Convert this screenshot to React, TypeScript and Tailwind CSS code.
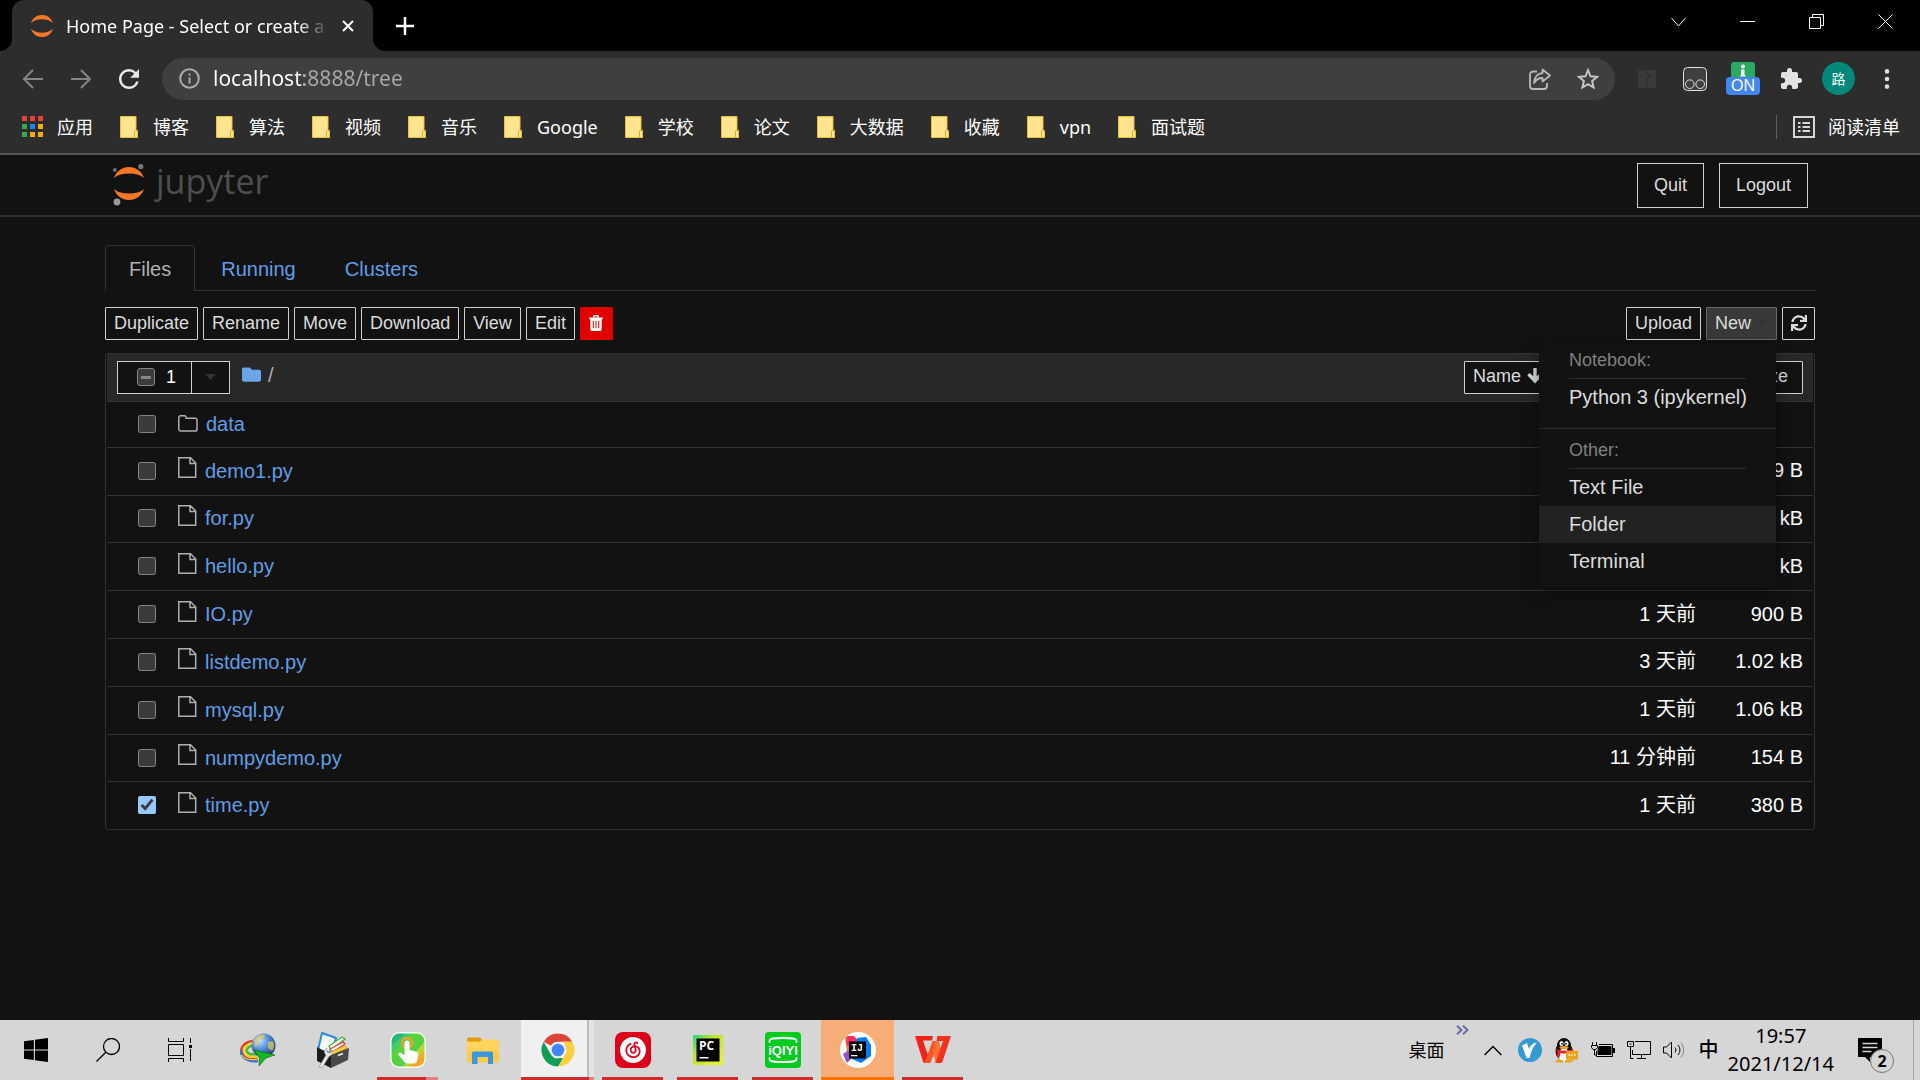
import React, { useEffect, useRef, useState } from "react";
import { clsx } from "clsx";
import { BsWindows } from "react-icons/bs";
import { FaFolder, FaSync } from "react-icons/fa";
import { MdExtension, MdRefresh } from "react-icons/md";
import { SiNeteasecloudmusic } from "react-icons/si";

const UI_FONT = "font-['Noto_Sans','Noto_Sans_CJK_SC',sans-serif]";
const PAGE_FONT = "font-['Liberation_Sans','Noto_Sans_CJK_SC',sans-serif]";

const bookmarks = [
  "博客",
  "算法",
  "视频",
  "音乐",
  "Google",
  "学校",
  "论文",
  "大数据",
  "收藏",
  "vpn",
  "面试题",
];

interface Entry {
  name: string;
  kind: "folder" | "file";
  modified?: string;
  size?: string;
  checked?: boolean;
}

const entries: Entry[] = [
  { name: "data", kind: "folder" },
  { name: "demo1.py", kind: "file", size: "9 B" },
  { name: "for.py", kind: "file", size: "kB" },
  { name: "hello.py", kind: "file", size: "kB" },
  { name: "IO.py", kind: "file", modified: "1 天前", size: "900 B" },
  { name: "listdemo.py", kind: "file", modified: "3 天前", size: "1.02 kB" },
  { name: "mysql.py", kind: "file", modified: "1 天前", size: "1.06 kB" },
  { name: "numpydemo.py", kind: "file", modified: "11 分钟前", size: "154 B" },
  { name: "time.py", kind: "file", modified: "1 天前", size: "380 B", checked: true },
];

/* ---------- browser chrome ---------- */

function Favicon() {
  return (
    <svg viewBox="0 0 22 22" className="size-[22px] shrink-0" fill="#f37726">
      <path d="M0 8C2 2.500 6 0 11 0s9 2.500 11 8C18.500 5.300 15 4.300 11 4.300S3.500 5.300 0 8Z" />
      <path d="M0 14c2 5.500 6 8 11 8s9-2.500 11-8c-3.500 2.700-7 3.700-11 3.700S3.500 16.700 0 14Z" />
    </svg>
  );
}

function TabStrip() {
  return (
    <div className="flex h-[51px] bg-black pl-3 text-white">
      <div className="relative flex w-[361px] items-center rounded-t-xl bg-[#2d2d2d] pl-[19px]">
        <span className="absolute bottom-0 -left-3 size-3 bg-[radial-gradient(circle_at_0_0,transparent_12px,#2d2d2d_12px)]" />
        <span className="absolute -right-3 bottom-0 size-3 bg-[radial-gradient(circle_at_100%_0,transparent_12px,#2d2d2d_12px)]" />
        <Favicon />
        <span className="ml-[13px] w-[263px] overflow-hidden text-lg whitespace-nowrap [mask-image:linear-gradient(to_right,black_88%,transparent)]">
          Home Page - Select or create a
        </span>
        <button aria-label="Close tab" className="ml-[11px] p-0.5">
          <svg viewBox="0 0 12 12" className="size-3" stroke="#fff" strokeWidth="2">
            <path d="M1 1l10 10M11 1L1 11" />
          </svg>
        </button>
      </div>
      <button aria-label="New tab" className="ml-[19px] px-1">
        <svg viewBox="0 0 18 18" className="size-[18px]" stroke="#fff" strokeWidth="2.500">
          <path d="M9 0v18M0 9h18" />
        </svg>
      </button>
      <div className="ml-auto flex h-[43px]">
        {[
          ["Search tabs", "M.5 4l7 8 7-8"],
          ["Minimize", "M0 7.500h15"],
          ["Restore", "M.5 3.500h11v11H.5zM3.500 3.500v-3h11v11h-3"],
          ["Close", "M.5.5l14 14M14.500.5l-14 14"],
        ].map(([label, d]) => (
          <button key={label} aria-label={label} className="flex w-[69px] items-center justify-center">
            <svg viewBox="0 0 15 15" className="size-[15px]" fill="none" stroke="#fff">
              <path d={d} />
            </svg>
          </button>
        ))}
      </div>
    </div>
  );
}

function AddressBar() {
  return (
    <div className="flex h-[55px] items-center bg-[#2d2d2d] pr-[30px] pl-[22px]">
      <button aria-label="Back">
        <svg viewBox="0 0 22 22" className="size-[22px]" fill="none" stroke="#858585" strokeWidth="2">
          <path d="M21 11H2.500M11 2l-9 9 9 9" />
        </svg>
      </button>
      <button aria-label="Forward" className="ml-[26px]">
        <svg viewBox="0 0 22 22" className="size-[22px]" fill="none" stroke="#858585" strokeWidth="2">
          <path d="M1 11h18.500M11 2l9 9-9 9" />
        </svg>
      </button>
      <button aria-label="Reload" className="ml-[22px]">
        <MdRefresh className="size-[30px] text-[#e8e8e8]" />
      </button>

      <div className="mr-[23px] ml-[18px] flex h-[42px] flex-1 items-center rounded-full bg-[#3f3f3f] pr-4 pl-[17px]">
        <svg viewBox="0 0 21 21" className="size-[21px]" fill="none" stroke="#a9acb0" strokeWidth="2">
          <circle cx="10.500" cy="10.500" r="9.300" />
          <path d="M10.500 9.500v6M10.500 5.500v2" />
        </svg>
        <input
          aria-label="Address"
          defaultValue="localhost:8888/tree"
          className="ml-[13px] min-w-0 flex-1 bg-[linear-gradient(to_right,#fff_91px,#a8a8a8_91px)] bg-clip-text text-[21px] text-transparent outline-none"
        />
        <button aria-label="Share">
          <svg viewBox="0 0 22 22" className="size-[22px]" fill="none" stroke="#b8b8b8" strokeWidth="1.800" strokeLinejoin="round">
            <path d="M8 3.500H4a3 3 0 0 0-3 3V18a3 3 0 0 0 3 3h11a3 3 0 0 0 3-3v-3" />
            <path d="M13.500 1.500l7.500 6-7.500 6V10c-4 0-6.500 1.500-8.500 5 .3-5 3-9.500 8.500-9.800z" />
          </svg>
        </button>
        <button aria-label="Bookmark this page" className="ml-[26px]">
          <svg viewBox="0 0 22 22" className="size-[22px]" fill="none" stroke="#c4c4c4" strokeWidth="2">
            <path d="M11 2.200l2.500 6.100 6.600.5-5 4.300 1.500 6.400L11 16.100l-5.600 3.400 1.500-6.400-5-4.300 6.600-.5z" />
          </svg>
        </button>
      </div>

      <button aria-label="Disabled extension">
        <svg viewBox="0 0 18 18" className="size-[18px]">
          <rect width="18" height="18" rx="1" fill="#3a3a3a" />
          <path d="M9 0v4c4 0 4 3 1 4s-2 5-1 6v4" fill="none" stroke="#2a2a2a" />
        </svg>
      </button>
      <button aria-label="Tampermonkey" className="ml-[27px]">
        <svg viewBox="0 0 24 24" className="size-6" fill="none" stroke="#e0e0e0">
          <rect x=".5" y=".5" width="23" height="23" rx="4" fill="#3f3f3f" />
          <circle cx="6.800" cy="17.200" r="4.300" />
          <circle cx="17.200" cy="17.200" r="4.300" />
        </svg>
      </button>
      <button aria-label="Download helper" className="ml-[19px] flex h-[33px] w-[34px] flex-col items-center">
        <svg viewBox="0 0 24 15" className="h-[15px] w-6">
          <path d="M0 15V3a3 3 0 0 1 3-3h18a3 3 0 0 1 3 3v12z" fill="#2aa961" />
          <circle cx="12" cy="4.500" r="2" fill="#fff" />
          <path d="M10 7.500h3.500V13h1v1.500h-5V13h.5z" fill="#fff" />
        </svg>
        <span className="h-[18px] w-full rounded-sm bg-[#4285f4] text-center font-['Liberation_Sans',sans-serif] text-base leading-[18px] text-white">
          ON
        </span>
      </button>
      <button aria-label="Extensions" className="ml-[19px]">
        <MdExtension className="size-6 text-[#e2e2e2]" />
      </button>
      <button className="ml-[19px] size-[33px] rounded-full bg-[#00897b] text-sm text-white">路</button>
      <button aria-label="Menu" className="ml-[29px]">
        <svg viewBox="0 0 6 20" className="h-5 w-1.5" fill="#dcdcdc">
          <circle cx="3" cy="2.400" r="2.300" />
          <circle cx="3" cy="10" r="2.300" />
          <circle cx="3" cy="17.600" r="2.300" />
        </svg>
      </button>
    </div>
  );
}

function BookmarkFolder() {
  return (
    <svg viewBox="0 0 18 22" className="h-[22px] w-[18px]">
      <path d="M.5.5H16v14h1.500v7H.5z" fill="#ffe48f" stroke="#e8c13c" />
      <path d="M14.500 21v-5.500a1 1 0 0 1 2 0" fill="none" stroke="#d9ae28" />
    </svg>
  );
}

function AppsIcon() {
  const colors = ["#ea4335", "#ea4335", "#ea4335", "#34a853", "#1a82ff", "#f9ab00", "#34a853", "#f9ab00", "#f9ab00"];
  return (
    <svg viewBox="0 0 21 21" className="size-[21px]">
      {colors.map((c, i) => (
        <rect key={i} x={(i % 3) * 8} y={Math.floor(i / 3) * 8} width="5" height="5" fill={c} />
      ))}
    </svg>
  );
}

function BookmarksBar() {
  return (
    <nav className="flex h-[49px] border-b-2 border-[#555] bg-[#2d2d2d] pr-5 pl-[22px] text-lg text-white">
      <div className="flex h-[41px] flex-1 items-center gap-[27px] whitespace-nowrap">
        <a href="#apps" className="flex items-center gap-[14px]">
          <AppsIcon />
          应用
        </a>
        {bookmarks.map((name) => (
          <a key={name} href="#bookmark" className="flex items-center gap-[15px]">
            <BookmarkFolder />
            {name}
          </a>
        ))}
      </div>
      <button className="flex h-[41px] items-center">
        <span className="mr-4 h-6 w-px bg-[#5f5f5f]" />
        <svg viewBox="0 0 22 22" className="mr-[13px] size-[22px]" fill="none" stroke="#d6d6d6" strokeWidth="2">
          <rect x="1" y="1" width="20" height="20" />
          <path d="M5 7h2.500M9.500 7H17M5 11h2.500M9.500 11H17M5 15h2.500M9.500 15H17" />
        </svg>
        阅读清单
      </button>
    </nav>
  );
}

/* ---------- notebook page ---------- */

function JupyterLogo() {
  return (
    <a href="#tree" className="flex items-start">
      <svg viewBox="0 0 34 44" className="h-11 w-[34px]">
        <g fill="#f37726">
          <path d="M2 15C4.500 8 10 4 17 4S29.500 8 32 15c-4-3.400-9-4.500-15-4.500S6 11.600 2 15Z" />
          <path d="M2 26c2.500 7 8 11 15 11s12.500-4 15-11c-4 3.400-9 4.500-15 4.500S6 29.400 2 26Z" />
        </g>
        <circle cx="2.800" cy="7" r="2" fill="#6f6f6f" />
        <circle cx="28.800" cy="3.500" r="2.600" fill="#767676" />
        <circle cx="5" cy="39" r="3.400" fill="#9a9a9a" />
      </svg>
      <span className="ml-2.5 font-['Open_Sans',sans-serif] text-[34px] leading-9 text-[#4e4e4e]">jupyter</span>
    </a>
  );
}

function PageHeader() {
  return (
    <header className="flex h-[62px] justify-between border-b-2 border-[#2e2e2e] px-28 pt-2">
      <JupyterLogo />
      <div className="flex h-[45px] gap-[15px] text-lg">
        <button className="border border-[#d0d0d0] px-4 pb-0.5">Quit</button>
        <button className="border border-[#d0d0d0] px-4 pb-0.5">Logout</button>
      </div>
    </header>
  );
}

function Tabs() {
  return (
    <div role="tablist" className="flex gap-[3px] border-b border-[#333] text-xl">
      <button
        role="tab"
        aria-selected="true"
        className="-mb-px h-[46px] rounded-t border border-b-0 border-[#333] bg-[#121212] px-[23px] text-[#b0b0b0]"
      >
        Files
      </button>
      <button role="tab" className="h-[45px] px-[23px] pt-0.5 text-[#5e9ee6]">
        Running
      </button>
      <button role="tab" className="h-[45px] px-[23px] pt-0.5 text-[#5e9ee6]">
        Clusters
      </button>
    </div>
  );
}

function Btn({ className, children, ...rest }: React.ButtonHTMLAttributes<HTMLButtonElement>) {
  return (
    <button
      className={clsx("flex h-[33px] items-center rounded-[1px] border px-2 pb-0.5 text-lg leading-6", className)}
      {...rest}
    >
      {children}
    </button>
  );
}

function Caret() {
  return (
    <svg viewBox="0 0 11 6" className="h-1.5 w-[11px]" fill="#333">
      <path d="M0 0h11L5.500 6z" />
    </svg>
  );
}

function TrashIcon() {
  return (
    <svg viewBox="0 0 14 16" className="h-4 w-3.5 shrink-0">
      <path d="M4.500 2.500l.6-1.700h3.800l.6 1.700" fill="none" stroke="#fff" strokeWidth="1.400" />
      <path d="M.3 2.400h13.400v1.800h-1V14a2 2 0 0 1-1.800 2H3.100a2 2 0 0 1-1.800-2V4.200h-1z" fill="#fff" />
      <path d="M4.300 5.800v7.500M7 5.800v7.500M9.700 5.800v7.500" stroke="#e00000" />
    </svg>
  );
}

function SortArrow() {
  return (
    <svg viewBox="0 0 16 16" className="size-4 shrink-0" fill="currentColor">
      <path d="M6.300 0h3.400v8.300l3.800-3.300L15.700 7.300 8 15.600.3 7.300 2.500 5l3.800 3.300z" />
    </svg>
  );
}

function MenuItem({ children, active }: { children: React.ReactNode; active?: boolean }) {
  return (
    <button
      role="menuitem"
      className={clsx(
        "block h-[37px] w-full px-[30px] pb-0.5 text-left text-xl leading-8 whitespace-nowrap",
        active && "bg-[#222]"
      )}
    >
      {children}
    </button>
  );
}

function NewMenu() {
  return (
    <div
      role="menu"
      className="absolute top-full right-px z-10 mt-1 w-[237px] rounded-sm bg-[#121212] pb-[7px] text-[#dcdcdc] shadow-[0_6px_18px_rgba(0,0,0,0.4)]"
    >
      <div className="mx-[30px] border-b border-[#2c2c2c] pt-1 pb-1.5 text-lg leading-6 text-[#808080]">Notebook:</div>
      <MenuItem>Python 3 (ipykernel)</MenuItem>
      <div className="mt-3 mb-[5px] h-px bg-[#2c2c2c]" />
      <div className="mx-[30px] border-b border-[#2c2c2c] pt-1 pb-1.5 text-lg leading-6 text-[#808080]">Other:</div>
      <MenuItem>Text File</MenuItem>
      <MenuItem active>Folder</MenuItem>
      <MenuItem>Terminal</MenuItem>
    </div>
  );
}

function Toolbar() {
  return (
    <div className="mt-4 flex justify-between">
      <div className="flex gap-[5px]">
        {["Duplicate", "Rename", "Move", "Download", "View", "Edit"].map((label) => (
          <Btn key={label} className="border-[#d0d0d0]">
            {label}
          </Btn>
        ))}
        <Btn aria-label="Delete" className="w-[33px] justify-center border-[#e00000] bg-[#e00000]">
          <TrashIcon />
        </Btn>
      </div>
      <div className="flex gap-[5px]">
        <Btn className="border-[#d0d0d0]">Upload</Btn>
        <div className="relative">
          <Btn aria-haspopup="menu" aria-expanded="true" className="gap-1.5 border-[#6a6a6a] bg-[#393939]">
            New
            <Caret />
          </Btn>
          <NewMenu />
        </div>
        <Btn aria-label="Refresh" className="w-[33px] justify-center border-[#d0d0d0]">
          <FaSync className="size-4 shrink-0" />
        </Btn>
      </div>
    </div>
  );
}

function FolderOutline() {
  return (
    <svg viewBox="0 0 20 17" className="h-[17px] w-5" fill="none" stroke="#b0b0b0" strokeWidth="1.500">
      <path d="M.8 2.500A1.700 1.700 0 0 1 2.500.8h4A1.700 1.700 0 0 1 8.200 2.500v.7h9A1.800 1.800 0 0 1 19 5v9.200a1.800 1.800 0 0 1-1.800 1.800H2.500a1.700 1.700 0 0 1-1.700-1.700z" />
    </svg>
  );
}

function FileOutline() {
  return (
    <svg viewBox="0 0 19 21" className="mb-1.5 h-[21px] w-[19px]" fill="none" stroke="#b0b0b0" strokeWidth="1.500">
      <path d="M.8.8h11.700l5.200 5.200v14.200H.8zM12 .8V6.500h5.700" />
    </svg>
  );
}

function FileList() {
  const [checked, setChecked] = useState(entries.map((e) => !!e.checked));
  const all = useRef<HTMLInputElement>(null);
  const count = checked.filter(Boolean).length;

  useEffect(() => {
    if (all.current) all.current.indeterminate = count > 0 && count < entries.length;
  }, [count]);

  const toggle = (i: number) => setChecked(checked.map((c, j) => (i === j ? !c : c)));

  return (
    <div className="mt-[13px] rounded-[3px] border border-[#333] px-px">
      <table className="h-[475px] w-full border-collapse text-xl text-white">
        <thead>
          <tr className="h-[47px] border-b border-[#333] bg-[#282828]">
            <th colSpan={3} className="px-2.5 font-normal">
              <div className="flex items-start">
                <div className="flex h-[33px] border border-[#d0d0d0] bg-[#121212] text-lg">
                  <label className="flex w-[73px] items-center gap-[11px] pl-[19px]">
                    <input
                      ref={all}
                      type="checkbox"
                      aria-label="Select all"
                      className="size-[18px] appearance-none rounded-[3px] border border-[#858585] bg-[#3b3b3b] bg-[length:10px_3px] bg-center bg-no-repeat indeterminate:bg-[image:linear-gradient(#858585,#858585)]"
                    />
                    {count}
                  </label>
                  <button aria-label="Select by type" className="flex w-[38px] items-center justify-center border-l border-[#d0d0d0]">
                    <Caret />
                  </button>
                </div>
                <a href="#root" className="ml-3 flex h-7 items-center gap-[7px] text-[#b0b0b0]">
                  <FaFolder className="size-[19px] text-[#6aa5e8]" />/
                </a>
                <div className="ml-auto flex w-[339px] justify-between">
                  <Btn className="gap-1.5 border-[#d0d0d0] bg-[#121212] text-[#dcdcdc]">
                    Name
                    <SortArrow />
                  </Btn>
                  <Btn className="border-[#d0d0d0] bg-[#121212] px-3.5 text-[#dcdcdc]">Size</Btn>
                </div>
              </div>
            </th>
          </tr>
        </thead>
        <tbody>
          {entries.map((e, i) => (
            <tr key={e.name} className="border-b border-[#333] last:border-b-0">
              <td className="pb-px pl-[31px]">
                <div className="flex items-center">
                  <input
                    type="checkbox"
                    aria-label={e.name}
                    checked={checked[i]}
                    onChange={() => toggle(i)}
                    className="mr-[22px] size-[18px] [color-scheme:dark]"
                  />
                  {e.kind === "folder" ? <FolderOutline /> : <FileOutline />}
                  <a href="#file" className="ml-2 text-[#5e9ee6]">
                    {e.name}
                  </a>
                </div>
              </td>
              <td className="pr-2.5 pb-0.5 text-right whitespace-nowrap">{e.modified}</td>
              <td className="w-[107px] pr-2.5 pb-0.5 text-right whitespace-nowrap">{e.size}</td>
            </tr>
          ))}
        </tbody>
      </table>
    </div>
  );
}

/* ---------- taskbar ---------- */

function SearchIcon() {
  return (
    <svg viewBox="0 0 24 24" className="size-6" fill="none" stroke="#000" strokeWidth="1.300">
      <circle cx="15.500" cy="8.500" r="8" />
      <path d="M9.800 14.200L.5 23.500" />
    </svg>
  );
}

function TaskViewIcon() {
  return (
    <svg viewBox="0 0 24 24" className="size-6" fill="none" stroke="#000">
      <path d="M.5 0v3.500h15V0M.5 6.500h15v11H.5zM.5 24v-3.500h15V24M22.500 0v5M22.500 11v12" />
      <path d="M21 7h3v3h-3z" fill="#000" stroke="none" />
    </svg>
  );
}

function IdmIcon() {
  return (
    <svg viewBox="0 0 36 34" className="h-[34px] w-9">
      <defs>
        <radialGradient id="globe" cx=".35" cy=".3" r=".8">
          <stop offset="0" stopColor="#bfe0ff" />
          <stop offset=".5" stopColor="#4b86d0" />
          <stop offset="1" stopColor="#16306a" />
        </radialGradient>
      </defs>
      <g fill="none" strokeWidth="2.400">
        <path d="M13 8C3 9 -.5 16 2.500 21s9 6 15 4.500" stroke="#e03a2a" />
        <path d="M13 10.300C5.500 11.500 2.500 16 5 20s7 4.300 12 3.300" stroke="#f5d327" />
        <path d="M13 12.600C8 13.500 5.500 16.500 7.300 19s5.500 2.800 9.700 2" stroke="#45b83a" />
        <path d="M1 17c-1 7 7 12.500 17 11" stroke="#3a6fd8" />
        <path d="M1.500 22c2 3.500 8 5.200 16 4.200" stroke="#f5d327" strokeWidth="1.200" />
      </g>
      <circle cx="23.500" cy="12.500" r="12" fill="url(#globe)" />
      <path d="M14 7c3-5 8-6 11-5l-2 4-4 1-1 5-3 2zM28 9l5-1c2 4 1 8-1 10l-4-3z" fill="#e3cf5a" opacity=".7" />
      <path d="M14 17l21 5-9 3-7 8 .5-8z" fill="#12b81e" stroke="#08650c" strokeWidth=".6" />
    </svg>
  );
}

function ToolboxIcon() {
  return (
    <svg viewBox="0 0 34 36" className="h-9 w-[34px]">
      <path d="M6 1l14 5-4 15-14-3z" fill="#f7fbff" stroke="#2a8bd6" strokeWidth="2" />
      <path d="M13 14l13-9 3 2-14 11z" fill="#fff" stroke="#44b02e" strokeWidth="1.400" />
      <path d="M14 17l13-7 2 2-14 9z" fill="#fff" stroke="#e04030" strokeWidth="1.400" />
      <path d="M15 20l14-6 2 2-15 7z" fill="#ffd24a" stroke="#e2a112" />
      <path d="M1 15l14 8v13L1 29z" fill="#1c1c1c" />
      <path d="M15 23l18-7-1 12-17 8z" fill="#4a4a4a" />
      <path d="M22 23.500l5-2" stroke="#eee" strokeWidth="1.600" />
      <path d="M3 35l7-12c-3-3-1-6 1-7v4l3 1 2-3c1 4-1 6-3 6.500L6 36z" fill="#e8e8e8" stroke="#888" strokeWidth=".6" />
    </svg>
  );
}

function TouchIcon() {
  return (
    <svg viewBox="0 0 36 36" className="size-9">
      <rect x=".8" y=".8" width="34.400" height="34.400" rx="8.500" fill="#3ecf6a" />
      <path d="M1 22L22 1h6a7 7 0 0 1 7 7L8 35a7 7 0 0 1-7-7z" fill="#57d23c" />
      <path d="M35 14v12a9 9 0 0 1-9 9h-8z" fill="#f6a623" />
      <path d="M35 9v9L18 35h-6z" fill="#b7d433" />
      <path d="M1 14V9a8 8 0 0 1 8-8h7z" fill="#28b779" />
      <rect x=".8" y=".8" width="34.400" height="34.400" rx="8.500" fill="none" stroke="#f4fff4" strokeWidth="1.500" />
      <circle cx="17" cy="11" r="5" fill="none" stroke="#f0a032" strokeWidth="2.500" />
      <path d="M14.500 11a2.500 2.500 0 0 1 5 0v7l6 1.500c2.500.8 3 2 2.700 4l-1 5c-.5 2-1.500 3-3.500 3h-6c-2 0-3-1-4-2.500L8.500 23c-.8-2 1.500-3.500 3-2l3 2.500z" fill="#fff" />
    </svg>
  );
}

function ExplorerIcon() {
  return (
    <svg viewBox="0 0 32 27" className="h-[27px] w-8">
      <path d="M0 2a1.500 1.500 0 0 1 1.500-1.500H13L16 4v4H0z" fill="#e09b0c" />
      <path d="M0 4.500h13l2-2h15.500A1.500 1.500 0 0 1 32 4v21.500H0z" fill="#ffd35c" />
      <path d="M0 14h32v11.500H0z" fill="#fbc63d" opacity=".6" />
      <path d="M5 27V16a1.500 1.500 0 0 1 1.500-1.500h18A1.500 1.500 0 0 1 26 16v11h-5v-7H10.500v7z" fill="#3a96dd" />
    </svg>
  );
}

function ChromeIcon() {
  return (
    <svg viewBox="0 0 34 34" className="size-[34px]">
      <circle cx="17" cy="17" r="16.500" fill="#fff" />
      <path d="M17 .5a16.500 16.500 0 0 1 14.300 8.250H17a8.250 8.250 0 0 0-7.100 4.100L2.700 8.750A16.500 16.500 0 0 1 17 .5z" fill="#db4437" />
      <path d="M31.300 8.750A16.500 16.500 0 0 1 17 33.500l7.150-12.400a8.250 8.250 0 0 0 0-8.200L22 8.750z" fill="#ffcd40" />
      <path d="M17 33.500A16.500 16.500 0 0 1 2.700 8.750l7.150 12.400A8.250 8.250 0 0 0 19 25l3 0z" fill="#0f9d58" />
      <circle cx="17" cy="17" r="8" fill="#f1f1f1" />
      <circle cx="17" cy="17" r="6.300" fill="#4285f4" />
    </svg>
  );
}

function NeteaseIcon() {
  return (
    <span className="flex size-9 items-center justify-center rounded-lg bg-[#dd001b]">
      <SiNeteasecloudmusic className="size-[26px] text-white" />
    </span>
  );
}

function PyCharmIcon() {
  return (
    <svg viewBox="0 0 30 30" className="size-[30px]">
      <defs>
        <linearGradient id="pc" x1="0" y1="0" x2="1" y2="1">
          <stop offset="0" stopColor="#21d789" />
          <stop offset=".35" stopColor="#b8e62c" />
          <stop offset="1" stopColor="#f2f230" />
        </linearGradient>
      </defs>
      <rect width="30" height="30" fill="url(#pc)" />
      <rect x="3.500" y="3.500" width="23" height="23" fill="#000" />
      <text x="6" y="15" fontSize="12" fontWeight="700" fill="#fff" fontFamily="Open Sans, sans-serif">
        PC
      </text>
      <rect x="6.500" y="22" width="9" height="1.500" fill="#fff" />
    </svg>
  );
}

function IqiyiIcon() {
  return (
    <svg viewBox="0 0 36 36" className="size-9">
      <rect width="36" height="36" rx="4" fill="#00cc1f" />
      <g fill="none" stroke="#fff" strokeWidth="1.800" strokeLinecap="round">
        <path d="M4.500 10V8.500C5 6.500 8 6 18 6s13 .5 13.500 2.500V10" />
        <path d="M4.500 26v1.500c.5 2 3.500 2.500 13.500 2.500s13-.5 13.500-2.500V26" />
      </g>
      <text x="18" y="23" textAnchor="middle" fontSize="13" fontWeight="700" fill="#fff" fontFamily="Liberation Sans, sans-serif">
        iQIYI
      </text>
    </svg>
  );
}

function IdeaIcon() {
  return (
    <svg viewBox="0 0 36 36" className="size-9">
      <circle cx="18" cy="18" r="18" fill="#fff" />
      <path d="M5 5l8-1 5 7-4 12-9 6 2-9z" fill="#f97a3d" />
      <path d="M7 4l7 0 5 6-8 6-5-4z" fill="#fe315d" />
      <path d="M3 22l6-4 3 8-5 5z" fill="#9a4fc4" />
      <path d="M17 6l9-1 5 8v11l-10 7-9-4z" fill="#087cfa" />
      <rect x="9" y="9.500" width="17" height="17" fill="#000" />
      <text x="11" y="19" fontSize="10" fontWeight="700" fill="#fff" fontFamily="Liberation Mono, monospace">
        IJ
      </text>
      <rect x="11" y="23" width="6.500" height="1.300" fill="#fff" />
    </svg>
  );
}

function WpsIcon() {
  return (
    <svg viewBox="0 0 36 28" className="h-7 w-9">
      <path d="M0 0h18l-1 4.500H8L15.500 27H10Q8.500 27 8 25.500z" fill="#f0241c" />
      <path d="M17.500 5H24L16 25.500Q15.500 27 14 27H9.500z" fill="#ff5424" />
      <path d="M20.500 5H24l2.500 12-3.500 10h-2.500L18 14z" fill="#ff7030" />
      <path d="M22.500 0H36l-8.500 25.500Q27 27 25.500 27h-5L28 5h-6.500z" fill="#f0321f" />
    </svg>
  );
}

interface TaskApp {
  label: string;
  icon: React.ReactNode;
  state?: "running" | "grouped" | "active" | "alert";
}

const apps: TaskApp[] = [
  { label: "Internet Download Manager", icon: <IdmIcon /> },
  { label: "Toolbox", icon: <ToolboxIcon /> },
  { label: "Touch assistant", icon: <TouchIcon />, state: "grouped" },
  { label: "File Explorer", icon: <ExplorerIcon /> },
  { label: "Chrome", icon: <ChromeIcon />, state: "active" },
  { label: "NetEase Cloud Music", icon: <NeteaseIcon />, state: "running" },
  { label: "PyCharm", icon: <PyCharmIcon />, state: "running" },
  { label: "iQIYI", icon: <IqiyiIcon />, state: "running" },
  { label: "IntelliJ IDEA", icon: <IdeaIcon />, state: "alert" },
  { label: "WPS Office", icon: <WpsIcon />, state: "running" },
];

function TaskbarApp({ label, icon, state }: TaskApp) {
  return (
    <button
      aria-label={label}
      className={clsx(
        "relative mx-px flex h-[60px] w-[73px] items-center justify-center",
        state === "active" && "bg-[linear-gradient(to_right,#f0f0f0_66px,#bdbdbd_66px,#bdbdbd_68px,#e4e4e4_68px)]",
        state === "alert" && "bg-[#f6ad77]"
      )}
    >
      {icon}
      {state === "running" && <span className="absolute bottom-0 left-1.5 h-[3px] w-[61px] bg-[#cc2b2f]" />}
      {state === "grouped" && (
        <span className="absolute bottom-0 left-1.5 h-[3px] w-[61px] bg-[linear-gradient(to_right,#cc2b2f_49px,#e08084_49px)]" />
      )}
      {state === "active" && (
        <span className="absolute inset-x-0 bottom-0 h-[3px] bg-[linear-gradient(to_right,#cc2b2f_68px,#e08084_68px)]" />
      )}
      {state === "alert" && <span className="absolute inset-x-0 bottom-0 h-[3px] bg-[#ff7200]" />}
    </button>
  );
}

function QqIcon() {
  return (
    <svg viewBox="0 0 25 25" className="size-[25px]">
      <ellipse cx="11" cy="13" rx="8.500" ry="10" fill="#111" />
      <ellipse cx="11" cy="7.500" rx="7" ry="7.500" fill="#111" />
      <ellipse cx="11" cy="17" rx="6" ry="6.500" fill="#fff" />
      <ellipse cx="8.500" cy="5.500" rx="2" ry="2.600" fill="#fff" />
      <ellipse cx="13.500" cy="5.500" rx="2" ry="2.600" fill="#fff" />
      <circle cx="9" cy="5.800" r=".9" />
      <circle cx="13" cy="5.800" r=".9" />
      <ellipse cx="11" cy="9.500" rx="4.500" ry="1.500" fill="#f5a214" />
      <path d="M2 10.500c5 3 13 3 18 0l.5 3c-5 2.500-9 2.500-13 1.500l-.5 4-3-.5.500-4.500z" fill="#e5222a" />
      <path d="M3 22.500c2-1.500 5-1.500 7 0v2H2.500zM12 22.500c2-1.500 5-1.500 7 0v2h-7z" fill="#f5a214" />
      <path d="M13 13h12v8.500h-4L19 24v-2.500h-6z" fill="#e8a317" />
      <path d="M15.500 17h1.500M18.200 17h1.500M21 17h1.500" stroke="#fff" strokeWidth="1.500" />
    </svg>
  );
}

function Tray() {
  return (
    <div className="ml-auto flex h-[60px] items-center text-black">
      <span className="text-lg">桌面</span>
      <svg viewBox="0 0 13 10" className="mb-10 ml-[11px] h-2.5 w-[13px]" fill="none" stroke="#6b6ba8" strokeWidth="2">
        <path d="M1 .8L5.500 5 1 9.200M7 .8L11.500 5 7 9.200" />
      </svg>
      <svg viewBox="0 0 18 11" className="ml-[15px] h-[11px] w-[18px]" fill="none" stroke="#000" strokeWidth="1.400">
        <path d="M.6 10L9 1.500l8.400 8.500" />
      </svg>
      <svg viewBox="0 0 24 24" className="ml-4 size-6">
        <circle cx="12" cy="12" r="12" fill="#3399d3" />
        <path d="M4 7.500l5-2.500 2 6c1-3 3-5.500 8-6.500-4 4-6 9-7.500 15.500H8.500z" fill="#fff" />
      </svg>
      <span className="ml-[11px]">
        <QqIcon />
      </span>
      <svg viewBox="0 0 24 16" className="ml-[13px] h-4 w-6" fill="none" stroke="#000">
        <path d="M1.500 0v3M5.500 0v3M.5 3.500h6v2l-1.500 2H2L.5 5.500zM3.500 7.500V13h2M8 2.500h13.500v12H5.500V9" />
        <path d="M8 4.500h12v8H7v-4z" fill="#000" />
        <path d="M23 6v5" strokeWidth="2" />
      </svg>
      <svg viewBox="0 0 24 18" className="ml-3 h-[18px] w-6" fill="none" stroke="#000">
        <path d="M8 .5h15.500v13H5.500V9M14.500 13.500v4M10 17.500h9M.5.5h6v5h-6zM2.500 3h2M3.500 5.500V17.500h3" />
      </svg>
      <svg viewBox="0 0 22 18" className="ml-3 h-[18px] w-[22px]" fill="none" stroke="#000">
        <path d="M.5 6v6h3l5 5V1l-5 5z" />
        <path d="M12 6.500c1.200 1.500 1.200 3.500 0 5M15 4c2.500 3 2.500 7 0 10" />
        <path d="M18 1.500c3.500 4.500 3.500 10.500 0 15" stroke="#888" />
      </svg>
      <span className="ml-3.5 text-xl font-medium">中</span>
      <div className="ml-[9px] text-center text-xl leading-7">
        <div>19:57</div>
        <div>2021/12/14</div>
      </div>
      <button aria-label="2 notifications" className="relative ml-6 flex">
        <svg viewBox="0 0 24 24" className="size-6">
          <path d="M0 0h24v19H12v5l-5-5H0z" />
          <path d="M4.500 5.500h15M4.500 9.500h15M4.500 13.500h9" stroke="#d6d6d6" strokeWidth="1.300" />
        </svg>
        <span className="absolute top-[11px] left-3 size-6 rounded-full border border-[#777] bg-[#d6d6d6] text-center text-base leading-[22px] font-bold">
          2
        </span>
      </button>
      <span className="ml-[31px] h-full w-[7px] border-l border-[#a5a5a5]" />
    </div>
  );
}

function Taskbar() {
  return (
    <footer className={clsx("mt-auto flex h-[60px] bg-[#d6d6d6]", UI_FONT)}>
      <button aria-label="Start" className="flex w-[72px] items-center justify-center">
        <BsWindows className="size-6 text-black" />
      </button>
      <button aria-label="Search" className="flex w-[72px] items-center justify-center">
        <SearchIcon />
      </button>
      <button aria-label="Task view" className="mr-1 flex w-[72px] items-center justify-center">
        <TaskViewIcon />
      </button>
      {apps.map((app) => (
        <TaskbarApp key={app.label} {...app} />
      ))}
      <Tray />
    </footer>
  );
}

export default function App() {
  return (
    <div className="flex min-h-screen flex-col bg-[#121212]">
      <div className={UI_FONT}>
        <TabStrip />
        <AddressBar />
        <BookmarksBar />
      </div>
      <div className={clsx("text-[#dcdcdc]", PAGE_FONT)}>
        <PageHeader />
        <main className="px-[105px] pt-7">
          <Tabs />
          <Toolbar />
          <FileList />
        </main>
      </div>
      <Taskbar />
    </div>
  );
}
